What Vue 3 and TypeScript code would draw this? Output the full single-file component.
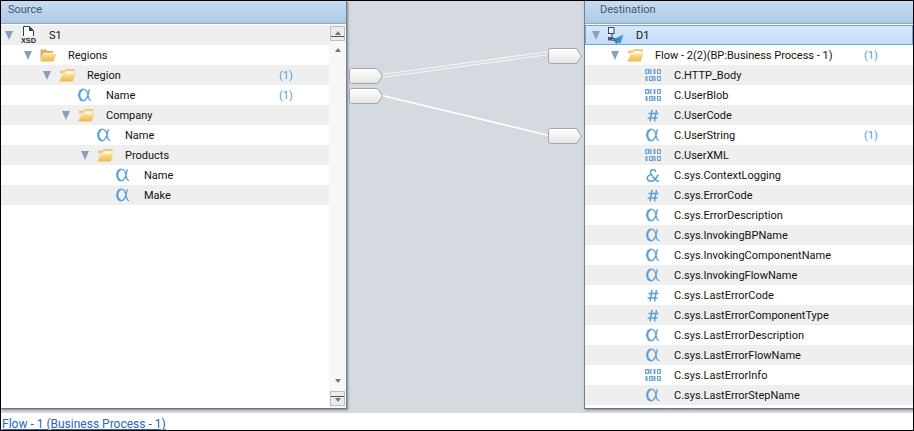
<script setup lang="ts">
type Kind = 'xsd' | 'plane' | 'folder' | 'plain' | 'alpha' | 'hash' | 'amp' | 'bin'
interface Row { label: string; level: number; kind: Kind; count?: number; open?: boolean; selected?: boolean }

const sourceRows: Row[] = [
  { label: 'S1', level: 0, kind: 'xsd', open: true },
  { label: 'Regions', level: 1, kind: 'plain', open: true },
  { label: 'Region', level: 2, kind: 'folder', open: true, count: 1 },
  { label: 'Name', level: 3, kind: 'alpha', count: 1 },
  { label: 'Company', level: 3, kind: 'folder', open: true },
  { label: 'Name', level: 4, kind: 'alpha' },
  { label: 'Products', level: 4, kind: 'folder', open: true },
  { label: 'Name', level: 5, kind: 'alpha' },
  { label: 'Make', level: 5, kind: 'alpha' },
]

const fields: [string, Kind, number?][] = [
  ['C.HTTP_Body', 'bin'],
  ['C.UserBlob', 'bin'],
  ['C.UserCode', 'hash'],
  ['C.UserString', 'alpha', 1],
  ['C.UserXML', 'bin'],
  ['C.sys.ContextLogging', 'amp'],
  ['C.sys.ErrorCode', 'hash'],
  ['C.sys.ErrorDescription', 'alpha'],
  ['C.sys.InvokingBPName', 'alpha'],
  ['C.sys.InvokingComponentName', 'alpha'],
  ['C.sys.InvokingFlowName', 'alpha'],
  ['C.sys.LastErrorCode', 'hash'],
  ['C.sys.LastErrorComponentType', 'hash'],
  ['C.sys.LastErrorDescription', 'alpha'],
  ['C.sys.LastErrorFlowName', 'alpha'],
  ['C.sys.LastErrorInfo', 'bin'],
  ['C.sys.LastErrorStepName', 'alpha'],
]

const destRows: Row[] = [
  { label: 'D1', level: 0, kind: 'plane', open: true, selected: true },
  { label: 'Flow - 2(2)(BP:Business Process - 1)', level: 1, kind: 'folder', open: true, count: 1 },
  ...fields.map(([label, kind, count]) => ({ label, kind, count, level: 2 })),
]

const panels = [
  { title: 'Source', rows: sourceRows, cls: 'source' },
  { title: 'Destination', rows: destRows, cls: 'dest' },
]

const nodes = [
  { x: 2, y: 67 },
  { x: 2, y: 87 },
  { x: 201, y: 47 },
  { x: 201, y: 127 },
]

const indent = (level: number) => ({ paddingLeft: `${level * 19}px` })
const nodePath = (x: number, y: number) =>
  `M${x + 2.5} ${y + 0.5}H${x + 28.5}L${x + 33.5} ${y + 8}L${x + 28.5} ${y + 15.5}H${x + 2.5}Q${x + 0.5} ${y + 15.5} ${x + 0.5} ${y + 13.5}V${y + 2.5}Q${x + 0.5} ${y + 0.5} ${x + 2.5} ${y + 0.5}Z`
</script>

<template>
  <div class="app">
    <svg class="defs" width="0" height="0" aria-hidden="true">
      <defs>
        <linearGradient id="fold" x1="0" y1="0" x2="0" y2="1">
          <stop offset="0" stop-color="#fbe29c" />
          <stop offset="1" stop-color="#efb74c" />
        </linearGradient>
        <linearGradient id="plane" x1="0" y1="0" x2="1" y2="0">
          <stop offset="0" stop-color="#1f6f9f" />
          <stop offset="1" stop-color="#4fa3d6" />
        </linearGradient>
        <linearGradient id="node" x1="0" y1="0" x2="0" y2="1">
          <stop offset="0" stop-color="#ffffff" />
          <stop offset="1" stop-color="#e4e4e4" />
        </linearGradient>
      </defs>
    </svg>
    <main class="workspace">
      <template v-for="(panel, pi) in panels" :key="panel.title">
        <section class="panel" :class="panel.cls">
          <header class="panel-head">{{ panel.title }}</header>
          <div class="panel-body">
            <div class="tree">
              <div
                v-for="(row, i) in panel.rows"
                :key="i"
                class="row"
                :class="{ stripe: i % 2 === 0, selected: row.selected }"
              >
                <div class="row-main" :style="indent(row.level)">
                  <span class="twisty"><i v-if="row.open" class="tri"></i></span>
                  <span class="icon">
                    <svg v-if="row.kind === 'xsd'" width="17" height="18" viewBox="0 0 17 18">
                      <path d="M3.500 10V.5H9.500L13.500 4.500V10" fill="#fff" stroke="#2b3a55" />
                      <path d="M9 .5V5H13.500Z" fill="#2b3a55" />
                      <text x="1" y="17" textLength="15" lengthAdjust="spacingAndGlyphs" class="xsd-text">XSD</text>
                    </svg>
                    <svg v-else-if="row.kind === 'plane'" width="17" height="19" viewBox="0 0 17 19">
                      <rect x="1.500" y="1.500" width="5.500" height="6" fill="#e8f1fb" stroke="#39465c" />
                      <path d="M5 7.500V12.500H8" fill="none" stroke="#39465c" />
                      <rect x="1" y="11" width="4.500" height="3.500" fill="#4d5b70" />
                      <path d="M16.500 8.500L4.500 14.500L8 15.500L9 18.500L11 16.500L13.500 17.500Z" fill="url(#plane)" />
                    </svg>
                    <svg v-else-if="row.kind === 'plain'" width="18" height="14" viewBox="0 0 18 14">
                      <path d="M1.500 12.500V1.500H7L8.500 3H14V5H4.500Z" fill="#dcb25f" />
                      <path d="M4.800 5.800H17.800L14.500 13.500H1.300Z" fill="url(#fold)" />
                    </svg>
                    <svg v-else-if="row.kind === 'folder'" width="18" height="14" viewBox="0 0 18 14">
                      <path d="M2 6V2.500H7L8 1H16.500V5H4.500Z" fill="#efca78" />
                      <path d="M8 3H15.500V5H7Z" fill="#fff6dc" />
                      <path d="M4.800 5.800H17.800L14.500 13.500H1.300Z" fill="url(#fold)" />
                    </svg>
                    <svg v-else-if="row.kind === 'bin'" width="16" height="12" viewBox="0 0 16 12">
                      <g fill="#cfe0f0" stroke="#6fa4d2">
                        <rect x="0.500" y="0.500" width="3" height="4" />
                        <path d="M5.500 0V5M9.500 0V5" stroke-width="2" />
                        <rect x="12.500" y="0.500" width="3" height="4" />
                        <path d="M1.500 7V12" stroke-width="2" />
                        <rect x="4.500" y="7.500" width="3" height="4" />
                        <path d="M9.500 7V12" stroke-width="2" />
                        <rect x="12.500" y="7.500" width="3" height="4" />
                      </g>
                    </svg>
                    <svg v-else-if="row.kind === 'alpha'" class="symbol" width="14" height="14" viewBox="0 0 14 14">
                      <path d="M11.500 1.200C10.800 3 10.400 5 10 7C9 10 7.500 12.800 5.200 12.800C2.500 12.800 .9 10.300 .9 7C.9 3.800 2.600 1.200 5.200 1.200C7.500 1.200 9.300 3.800 10 7C10.400 10 11 12.600 13.300 12.600" stroke-width="1.300" />
                      <path d="M4.500 1.800C2.500 2.500 1.500 4.500 1.500 7C1.500 9.500 2.500 11.500 4.500 12.200" stroke-width="1.800" />
                    </svg>
                    <svg v-else-if="row.kind === 'hash'" class="symbol hash" width="12" height="13" viewBox="0 0 12 13">
                      <path d="M5 1L3 12.500M9.500 1L7.500 12.500M1.500 4.500H11.500M.5 9H10.500" stroke-width="1.500" />
                    </svg>
                    <svg v-else class="symbol" width="15" height="13" viewBox="0 0 15 13">
                      <path d="M9.500 3C9.500 1.500 8.500 .8 7.200 .8C5.500 .8 4.500 2 4.500 3.300C4.500 5 6 6.500 7.500 8.500C9 10.500 10.500 12.200 13 12.200M12.500 6C11 6 11 8 9.500 10C8 11.800 6.500 12.300 5 12.300C2.800 12.300 1.200 11 1.200 9.200C1.200 7.500 2.700 6.300 5.500 5.500" stroke-width="1.500" />
                    </svg>
                  </span>
                  <span class="label">{{ row.label }}</span>
                </div>
                <span v-if="row.count" class="count">({{ row.count }})</span>
              </div>
            </div>
            <div v-if="panel.cls === 'source'" class="scrollbar">
              <span class="sb-btn"><i class="bar"></i><i class="up small"></i></span>
              <i class="up"></i>
              <span class="sb-fill"></span>
              <i class="down"></i>
              <span class="sb-btn end"><i class="bar"></i><i class="down small"></i></span>
            </div>
          </div>
        </section>
        <div v-if="pi === 0" class="canvas">
          <svg class="links" width="237" height="412" viewBox="0 0 237 412">
            <path d="M35 73.500L202 50.500M35 76.500L202 53.500" stroke="#f4f5f7" stroke-width="1.200" fill="none" />
            <path d="M35 94.500L202 134.500" stroke="#fff" stroke-width="1.700" fill="none" />
            <path v-for="n in nodes" :key="n.y" :d="nodePath(n.x, n.y)" fill="url(#node)" stroke="#a3a5a8" />
          </svg>
        </div>
      </template>
    </main>
    <footer class="footer"><a class="link">Flow - 1 (Business Process - 1)</a></footer>
  </div>
</template>

<style scoped>
.defs { position: absolute; }
.app {
  box-sizing: border-box;
  width: 914px;
  height: 431px;
  border: 1px solid #000;
  background: #fff;
  display: flex;
  flex-direction: column;
  overflow: hidden;
  font-family: Roboto, "Noto Sans", sans-serif;
  font-size: 11px;
  color: #111;
}
.workspace {
  display: flex;
  height: 412px;
  flex: none;
  background: #d5d9e0;
}
.panel {
  height: 408px;
  box-sizing: border-box;
  background: #fff;
  display: flex;
  flex-direction: column;
  border-bottom: 1px solid #70757c;
  box-shadow: 1px 1px 2px rgba(70, 75, 85, 0.6);
  overflow: hidden;
}
.source { width: 346px; border-right: 1px solid #76808c; }
.dest { width: 329px; border-left: 1px solid #76808c; }
.canvas { flex: 1; position: relative; }
.links { position: absolute; left: 0; top: 0; }
.panel-head {
  height: 23px;
  box-sizing: border-box;
  flex: none;
  padding: 0 0 2px 7px;
  line-height: 17px;
  color: #47566b;
  background: linear-gradient(#c6dcf3, #adc9e6);
  border-bottom: 1px solid #9ba7b4;
}
.dest .panel-head { padding-left: 15px; }
.panel-body { display: flex; flex: 1; min-height: 0; }
.tree { flex: 1; min-width: 0; padding-top: 1px; }
.row {
  height: 20px;
  display: flex;
  align-items: center;
  box-sizing: border-box;
}
.row.stripe { background: #efefef; }
.row.selected {
  background: linear-gradient(#d6e8fd, #c3dcf9);
  border: 1px solid #6ba6e2;
}
.row-main {
  flex: 1;
  display: flex;
  align-items: center;
  margin-left: 4px;
  min-width: 0;
}
.dest .row-main { margin-left: 7px; }
.dest .row.selected .row-main { margin-left: 6px; }
.twisty { width: 15px; flex: none; display: flex; }
.tri {
  width: 0;
  height: 0;
  margin-top: 1px;
  border-left: 4px solid transparent;
  border-right: 4px solid transparent;
  border-top: 9px solid #8d9fb8;
}
.icon { width: 29px; flex: none; display: flex; align-items: center; height: 19px; }
.symbol { fill: none; stroke: #5d9fd3; margin-left: 1px; }
.symbol.hash { margin-left: 2px; }
.xsd-text {
  font-family: "Liberation Sans", sans-serif;
  font-size: 8px;
  font-weight: 700;
  fill: #1d2638;
}
.label { white-space: nowrap; }
.count { color: #5b9bd5; flex: none; width: 14px; margin-right: 36px; }
.dest .count { margin-right: 35px; }
.scrollbar {
  width: 17px;
  flex: none;
  background: #f7f7f7;
  display: flex;
  flex-direction: column;
  align-items: center;
}
.sb-btn {
  width: 15px;
  height: 15px;
  flex: none;
  box-sizing: border-box;
  margin-top: 2px;
  background: #ececf0;
  border: 1px solid #b9bec6;
  display: flex;
  flex-direction: column-reverse;
  align-items: center;
  justify-content: center;
  gap: 1px;
}
.sb-btn.end { flex-direction: column; margin: 0 0 2px; }
.bar { width: 13px; height: 1px; background: #555; flex: none; }
.up, .down {
  width: 0;
  height: 0;
  flex: none;
  border-left: 3px solid transparent;
  border-right: 3px solid transparent;
}
.up { border-bottom: 4px solid #777; margin-top: 7px; }
.down { border-top: 4px solid #777; margin-bottom: 8px; }
.up.small, .down.small { margin: 0; }
.sb-fill { flex: 1; }
.footer {
  flex: 1;
  min-height: 0;
  line-height: 16px;
  padding: 3px 0 0 1px;
  font-size: 12px;
  overflow: hidden;
}
.link { color: #2c62c8; text-decoration: underline; white-space: nowrap; }
</style>
